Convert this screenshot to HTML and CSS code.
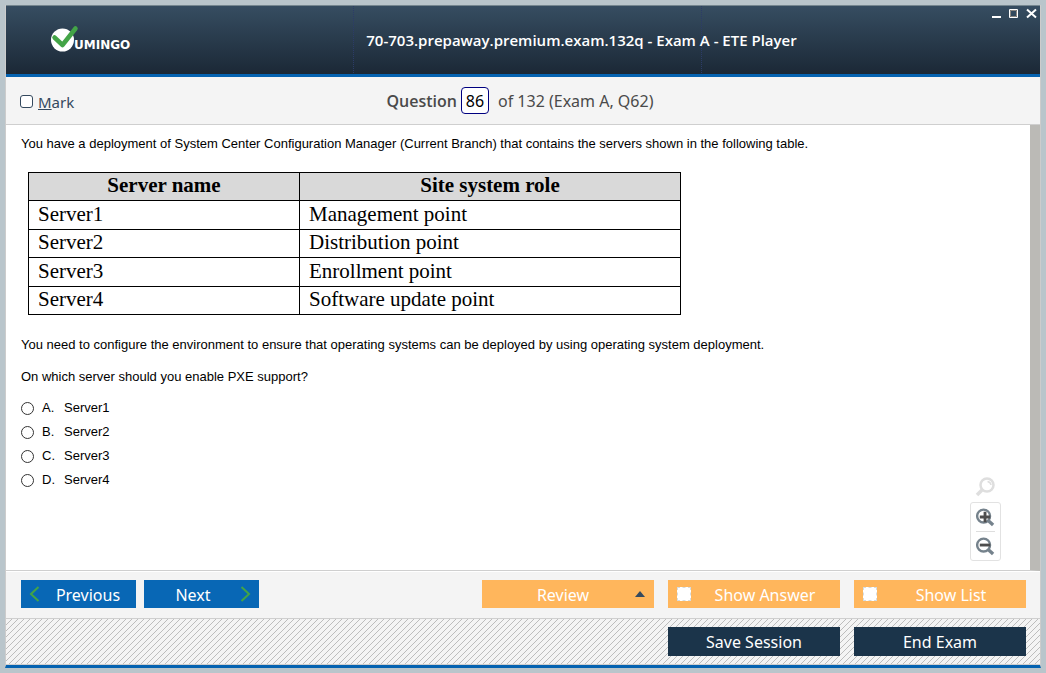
FILE: index.html
```html
<!DOCTYPE html>
<html lang="en">
<head>
<meta charset="utf-8">
<title>ETE Player</title>
<link rel="stylesheet" href="styles.css">
</head>
<body>
<div class="window">
  <header class="titlebar">
    <svg class="logo" width="82" height="30" viewBox="0 0 82 30" role="img" aria-label="Vumingo">
      <circle cx="12.500" cy="15" r="11.500" fill="#fff"/>
      <path d="M4.500 12.500 L12.500 20 L25.500 3.500" fill="none" stroke="#43a447" stroke-width="4.500" stroke-linecap="round" stroke-linejoin="round"/>
      <text class="logo-text" x="24" y="24">UMINGO</text>
    </svg>
    <h1 class="title">70-703.prepaway.premium.exam.132q - Exam A - ETE Player</h1>
    <div class="controls">
      <button class="control" type="button" aria-label="Minimize"><svg width="11" height="11" viewBox="0 0 11 11"><path d="M2 9h9" stroke="#fff" stroke-width="2"/></svg></button>
      <button class="control" type="button" aria-label="Maximize"><svg width="11" height="11" viewBox="0 0 11 11"><path d="M1.500 1.500h8v8h-8z" fill="none" stroke="#fff"/><path d="M2.500 2.500h6v6h-6z" fill="none" stroke="#8d8780"/></svg></button>
      <button class="control" type="button" aria-label="Close"><svg width="11" height="11" viewBox="0 0 11 11"><path d="M1 1.500L10 9.500M10 1.500L1 9.500" stroke="#fff" stroke-width="2"/></svg></button>
    </div>
  </header>
  <div class="infobar">
    <label class="mark"><input class="mark-box" type="checkbox"><span><u>M</u>ark</span></label>
    <div class="position"><label class="position-label" for="number">Question</label><input class="number" id="number" type="text" value="86"><span>of 132 (Exam A, Q62)</span></div>
  </div>
  <main class="content">
    <div class="question">
      <p class="text">You have a deployment of System Center Configuration Manager (Current Branch) that contains the servers shown in the following table.</p>
      <table class="servers">
        <thead><tr><th class="name-col">Server name</th><th class="role-col">Site system role</th></tr></thead>
        <tbody>
          <tr><td>Server1</td><td>Management point</td></tr>
          <tr><td>Server2</td><td>Distribution point</td></tr>
          <tr><td>Server3</td><td>Enrollment point</td></tr>
          <tr><td>Server4</td><td>Software update point</td></tr>
        </tbody>
      </table>
      <p class="text">You need to configure the environment to ensure that operating systems can be deployed by using operating system deployment.</p>
      <p class="text">On which server should you enable PXE support?</p>
      <div class="answers">
        <label class="answer"><input class="radio" type="radio" name="answer"><span class="letter">A.</span><span>Server1</span></label>
        <label class="answer"><input class="radio" type="radio" name="answer"><span class="letter">B.</span><span>Server2</span></label>
        <label class="answer"><input class="radio" type="radio" name="answer"><span class="letter">C.</span><span>Server3</span></label>
        <label class="answer"><input class="radio" type="radio" name="answer"><span class="letter">D.</span><span>Server4</span></label>
      </div>
    </div>
    <div class="zoom">
      <svg width="22" height="22" viewBox="0 0 22 22" fill="none" stroke="#dedede" aria-hidden="true"><circle cx="12" cy="9" r="6.500" stroke-width="2.500"/><path d="M7.500 13.500L2 19" stroke-width="3.500"/><path d="M12.500 5.500q3 .5 3.500 3.500" stroke-width="1.500"/></svg>
      <div class="zoom-panel">
        <button class="zoom-button" type="button" aria-label="Zoom in"><svg width="20" height="20" viewBox="0 0 20 20" fill="none"><circle cx="8" cy="9" r="6.800" stroke="#75828c" stroke-width="2.500"/><path d="M12.500 13.500l5.500 5" stroke="#75828c" stroke-width="3.500"/><path d="M4 10h11M9.500 4.500v11" stroke="#4d4d4d" stroke-width="3"/></svg></button>
        <button class="zoom-button" type="button" aria-label="Zoom out"><svg width="20" height="20" viewBox="0 0 20 20" fill="none"><circle cx="8" cy="9" r="6.800" stroke="#75828c" stroke-width="2.500"/><path d="M12.500 13.500l5.500 5" stroke="#75828c" stroke-width="3.500"/><path d="M4 9h11" stroke="#4d4d4d" stroke-width="3"/></svg></button>
      </div>
    </div>
  </main>
  <nav class="navbar">
    <button class="button blue" type="button"><svg width="11" height="16" viewBox="0 0 11 16" fill="none"><path d="M9.500 1L2 8l7.500 7" stroke="#43a447" stroke-width="2"/></svg><span class="caption after-icon">Previous</span></button>
    <button class="button blue" type="button"><span class="caption before-icon">Next</span><svg width="11" height="16" viewBox="0 0 11 16" fill="none"><path d="M1.500 1L9 8l-7.500 7" stroke="#43a447" stroke-width="2"/></svg></button>
    <div class="spacer"></div>
    <button class="button orange" type="button"><span class="caption">Review</span><svg width="10" height="6" viewBox="0 0 10 6"><path d="M0 6L5 0l5 6z" fill="#34495e"/></svg></button>
    <button class="button orange" type="button"><span class="box"></span><span class="caption after-icon">Show Answer</span></button>
    <button class="button orange" type="button"><span class="box"></span><span class="caption after-icon">Show List</span></button>
  </nav>
  <footer class="sessionbar">
    <button class="button dark" type="button"><span class="caption">Save Session</span></button>
    <button class="button dark" type="button"><span class="caption">End Exam</span></button>
  </footer>
</div>
</body>
</html>
```
FILE: styles.css
```css
* { box-sizing: border-box; }
body { margin: 0; padding: 5px; min-height: 100vh; display: flex; background: #b9c5cb; font-family: "Noto Sans", sans-serif; }
button { font: inherit; padding: 0; border: 0; background: none; }
.window { flex: 1; display: flex; flex-direction: column; border-left: 1px solid #cccccc; border-right: 1px solid #cccccc; border-bottom: 3px solid #0563b1; background: #f4f4f4; }
.titlebar {
  display: grid; grid-template-columns: 1fr auto 1fr; align-items: center; height: 72px; padding-left: 44px;
  border-top: 1px solid #75868f; border-bottom: 3px solid #0563b1;
  background:
    linear-gradient(#2c3c68 50%, transparent 50%) 33.6% 0 / 1px 2px repeat-y,
    linear-gradient(#2c3c68 50%, transparent 50%) 67.3% 0 / 1px 2px repeat-y,
    linear-gradient(#364d61, #1b2836);
}
.logo-text { font: bold 12px "DejaVu Sans", sans-serif; fill: #fff; }
.title { margin: 0; padding-left: 73px; font: 600 15px "Open Sans", sans-serif; color: #fff; }
.controls { display: flex; gap: 7px; align-self: start; justify-content: flex-end; padding: 2px 3px; }
.control { display: flex; }
.infobar { display: grid; grid-template-columns: 1fr auto 1fr; align-items: center; height: 48px; padding: 0 14px; border-bottom: 1px solid #cfcfcf; color: #4a4a4a; font-size: 16px; }
.mark { display: flex; align-items: center; gap: 5px; padding-top: 2px; color: #34495e; font-size: 15px; }
.mark-box { appearance: none; width: 13px; height: 13px; margin: 0; border: 1px solid #34495e; border-radius: 3px; background: #fff; }
.position { display: flex; align-items: center; padding-right: 6px; }
.position-label { font-family: "Open Sans", sans-serif; font-weight: 600; }
.number { width: 28px; height: 27px; margin: 0 9px 0 4px; padding: 0; border: 1px solid #000080; border-radius: 4px; text-align: center; font: 16px "Noto Sans", sans-serif; }
.content { flex: 1; display: flex; justify-content: space-between; border-right: 10px solid #bbbab6; border-bottom: 1px solid #cfcfcf; background: #fff; font-family: "Liberation Sans", sans-serif; font-size: 13px; line-height: 16px; color: #000; }
.question { flex: 1; padding: 11px 15px; }
.text { margin: 0 0 16px; }
.servers { margin: 20px 7px 22px; border-collapse: collapse; font: 21px/22px "Liberation Serif", serif; }
.servers th, .servers td { height: 28px; padding: 0 9px 3px; border: 1px solid #000; text-align: left; }
.servers tbody tr:nth-child(odd) td { height: 29px; }
.servers th { background: #d9d9d9; text-align: center; }
.name-col { width: 271px; }
.role-col { width: 381px; }
.answer { display: flex; align-items: center; height: 24px; }
.answers { margin-top: -5px; }
.radio { appearance: none; width: 13px; height: 13px; margin: 0 8px 0 0; border: 1px solid #333; border-radius: 50%; }
.letter { width: 22px; }
.zoom { display: flex; flex-direction: column; align-items: center; justify-content: flex-end; gap: 4px; padding: 0 29px 9px 0; }
.zoom-panel { width: 31px; padding: 0 5px; border: 1px solid #e2e2e2; border-radius: 3px; }
.zoom-button { display: flex; align-items: center; width: 100%; height: 28px; }
.zoom-button + .zoom-button { height: 29px; border-top: 1px solid #dedede; }
.navbar { display: flex; gap: 14px; height: 48px; padding: 8px 14px 0 15px; border-top: 1px solid #fff; border-bottom: 1px solid #cfcfcf; }
.navbar .blue + .blue { margin-left: -6px; }
.spacer { flex: 1; }
.button { display: flex; align-items: center; height: 28px; color: #fff; font-size: 16px; }
.caption { flex: 1; text-align: center; }
.navbar .caption { padding-top: 2px; }
.after-icon { padding-left: 8px; }
.before-icon { padding-right: 6px; }
.blue { width: 115px; padding: 0 8px; background: #0867b5; }
.orange { width: 172px; padding: 0 9px; background: #ffb65c; }
.dark { width: 172px; height: 29px; background: #1b344a; }
.box { width: 14px; height: 14px; border: 1px dashed #d5dce0; background: #fff; }
.sessionbar { display: flex; justify-content: flex-end; gap: 14px; height: 46px; padding: 8px 14px 0 0; border-bottom: 1px solid #cfcfcf; background: linear-gradient(135deg, #f4f4f4 44%, #bdbdbd 44% 56%, #f4f4f4 56%) 0 0 / 6px 6px; }
```
